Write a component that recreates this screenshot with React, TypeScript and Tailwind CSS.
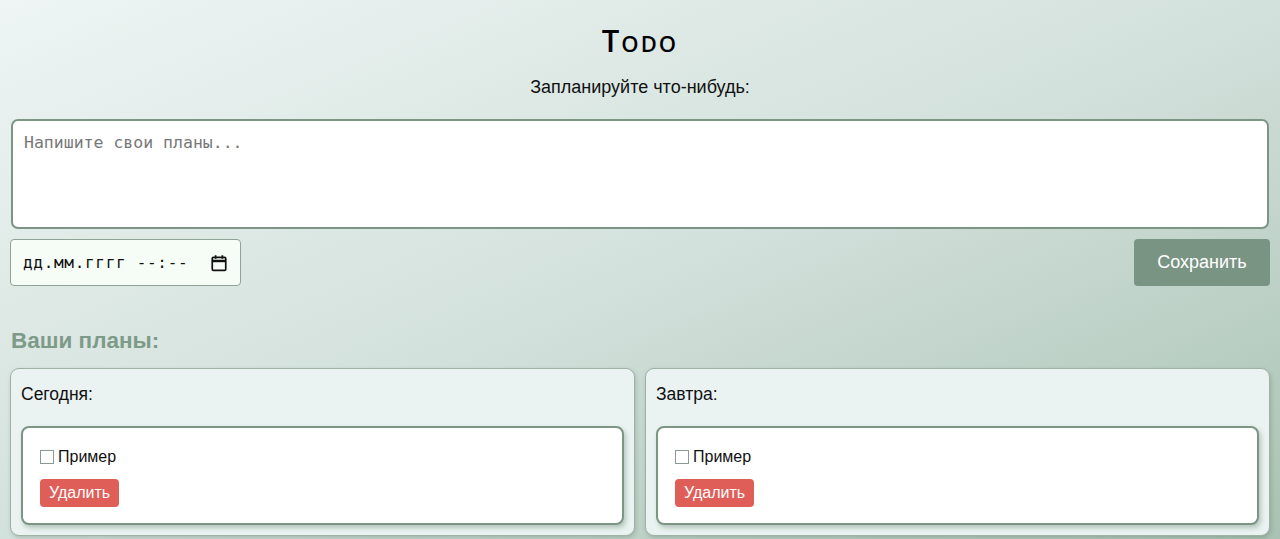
import React from "react";

const lists = [
  { title: "Сегодня:", items: ["Пример"] },
  { title: "Завтра:", items: ["Пример"] },
];

function CalendarIcon() {
  return (
    <svg width="18" height="18" viewBox="0 0 16 16" fill="none" stroke="#111" strokeWidth="1.5">
      <rect x="2" y="3" width="12" height="11.5" rx="1" />
      <path d="M2 6.2h12" strokeWidth="2.2" />
      <path d="M5 1.2v3M11 1.2v3" />
    </svg>
  );
}

export default function App() {
  return (
    <div className="min-h-[539px] w-full bg-linear-to-br from-[#eef5f4] via-[#d3e1dc] to-[#a9c2b3] px-[10px] pt-[22px] pb-[4px] font-['Liberation_Sans',Arial,sans-serif] text-black">
      {/* шапка */}
      <h1 className="text-center text-[31px] leading-[36px] tracking-[2px] font-['Open_Sans',sans-serif] font-semibold [font-variant:small-caps]">
        Todo
      </h1>
      <p className="mt-[19px] text-center text-[18px] leading-[20px] text-[#111]">Запланируйте что-нибудь:</p>

      {/* форма */}
      <div className="mt-[22px] h-[110px] rounded-[7px] border-2 border-[#7c9585] bg-white mx-[1px] px-[11px] py-[12px]">
        <div className="font-['DejaVu_Sans_Mono',monospace] text-[16.5px] leading-[20px] text-[#777]">Напишите свои планы...</div>
      </div>

      <div className="mt-[10px] flex items-center justify-between">
        <div className="flex h-[47px] w-[231px] items-center rounded-[4px] border border-[#8fa497] bg-[#f6fcf6] pl-[12px] pr-[12px]">
          <span className="font-['DejaVu_Sans_Mono',monospace] text-[16px] text-[#111] tracking-[0.7px]">дд.мм.гггг --:--</span>
          <span className="ml-auto flex"><CalendarIcon /></span>
        </div>
        <button className="h-[47px] w-[136px] rounded-[4px] bg-[#7a9484] text-[18px] text-white">Сохранить</button>
      </div>

      {/* списки */}
      <h2 className="mt-[42px] ml-[1px] text-[22.5px] leading-[26px] font-bold text-[#7e9a88]">Ваши планы:</h2>

      <div className="mt-[14px] grid grid-cols-2 gap-[10px]">
        {lists.map((list) => (
          <div
            key={list.title}
            className="rounded-[9px] border border-[#9db1a4] bg-[#eaf3f1] px-[10px] pt-[15px] pb-[10px] shadow-[1px_2px_4px_rgba(60,90,70,0.25)]"
          >
            <div className="text-[17.5px] leading-[20px] text-[#111]">{list.title}</div>
            <div className="mt-[22px] flex flex-col gap-[10px] rounded-[8px] border-2 border-[#7c9585] bg-white px-[17px] pt-[20px] pb-[16px] shadow-[2px_3px_5px_rgba(60,90,70,0.3)]">
              {list.items.map((item) => (
                <div key={item} className="flex flex-col items-start gap-[13px]">
                  <label className="flex items-center gap-[4px] text-[16px] leading-[18px] text-[#111]">
                    <span className="inline-block h-[14px] w-[14px] border border-[#8a9a90] bg-white" />
                    {item}
                  </label>
                  <button className="h-[28px] rounded-[4px] bg-[#e05e58] px-[9px] text-[16px] text-white">Удалить</button>
                </div>
              ))}
            </div>
          </div>
        ))}
      </div>
    </div>
  );
}
